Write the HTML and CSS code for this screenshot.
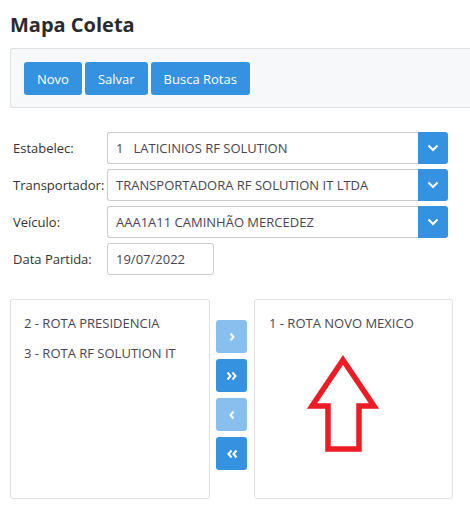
FILE: index.html
```html
<!DOCTYPE html>
<html>
<head>
<meta charset="utf-8">
<link rel="stylesheet" href="styles.css">
</head>
<body>
<h1 class="title">Mapa Coleta</h1>
<div class="toolbar">
  <button class="btn">Novo</button>
  <button class="btn">Salvar</button>
  <button class="btn">Busca Rotas</button>
</div>
<div class="form">
  <div class="row">
    <label class="lbl">Estabelec:</label>
    <div class="select"><span class="val">1&nbsp;&nbsp;&nbsp;LATICINIOS RF SOLUTION</span><span class="caret"><svg width="12" height="8" viewBox="0 0 12 8"><polyline points="1.5,1.5 6,6 10.5,1.5" fill="none" stroke="#fff" stroke-width="2"/></svg></span></div>
  </div>
  <div class="row">
    <label class="lbl">Transportador:</label>
    <div class="select"><span class="val">TRANSPORTADORA RF SOLUTION IT LTDA</span><span class="caret"><svg width="12" height="8" viewBox="0 0 12 8"><polyline points="1.5,1.5 6,6 10.5,1.5" fill="none" stroke="#fff" stroke-width="2"/></svg></span></div>
  </div>
  <div class="row">
    <label class="lbl">Veículo:</label>
    <div class="select"><span class="val">AAA1A11 CAMINHÃO MERCEDEZ</span><span class="caret"><svg width="12" height="8" viewBox="0 0 12 8"><polyline points="1.5,1.5 6,6 10.5,1.5" fill="none" stroke="#fff" stroke-width="2"/></svg></span></div>
  </div>
  <div class="row">
    <label class="lbl">Data Partida:</label>
    <div class="date">19/07/2022</div>
  </div>
</div>
<div class="dual">
  <div class="list">
    <div class="item">2 - ROTA PRESIDENCIA</div>
    <div class="item">3 - ROTA RF SOLUTION IT</div>
  </div>
  <div class="moves">
    <button class="mv light"><svg width="8" height="10" viewBox="0 0 8 10"><polyline points="2.5,1.5 5.5,5 2.5,8.5" fill="none" stroke="#fff" stroke-width="2"/></svg></button>
    <button class="mv"><svg width="12" height="10" viewBox="0 0 12 10"><polyline points="1.5,1.5 4.5,5 1.5,8.5" fill="none" stroke="#fff" stroke-width="2"/><polyline points="6.5,1.5 9.5,5 6.5,8.5" fill="none" stroke="#fff" stroke-width="2"/></svg></button>
    <button class="mv light"><svg width="8" height="10" viewBox="0 0 8 10"><polyline points="5.5,1.5 2.5,5 5.5,8.5" fill="none" stroke="#fff" stroke-width="2"/></svg></button>
    <button class="mv"><svg width="12" height="10" viewBox="0 0 12 10"><polyline points="5.5,1.5 2.5,5 5.5,8.5" fill="none" stroke="#fff" stroke-width="2"/><polyline points="10.5,1.5 7.5,5 10.5,8.5" fill="none" stroke="#fff" stroke-width="2"/></svg></button>
  </div>
  <div class="list right">
    <div class="item">1 - ROTA NOVO MEXICO</div>
    <svg class="arrow" width="198" height="198" viewBox="254 299 198 198"><polygon points="343,360 374,406 359,406 359,449 328,449 328,406 312,406" fill="none" stroke="#ec1c24" stroke-width="5.5" stroke-linejoin="miter"/></svg>
  </div>
</div>
</body>
</html>
```
FILE: styles.css
```css
html, body { margin: 0; padding: 0; }
body {
  padding: 0 10px;
  font-family: "Open Sans", "Liberation Sans", sans-serif;
  font-size: 13px;
  color: #333;
  background: #fff;
  overflow: hidden;
  width: 470px;
  box-sizing: border-box;
}
.title {
  margin: 0;
  padding-top: 11px;
  height: 48px;
  box-sizing: border-box;
  font-size: 20px;
  font-weight: 700;
  line-height: 28px;
  color: #2b2b2b;
}
.toolbar {
  width: calc(100% + 10px);
  height: 60px;
  box-sizing: border-box;
  border: 1px solid #dfe1e6;
  border-right: none;
  border-radius: 3px 0 0 3px;
  background: #f7f8fa;
  padding: 13px 13px;
  display: flex;
  gap: 3px;
}
.btn {
  height: 33px;
  border: none;
  border-radius: 3px;
  background: #3592e0;
  color: #fff;
  font-family: "Open Sans", "Liberation Sans", sans-serif;
  font-size: 13px;
  padding: 0 13px;
}
.form {
  padding: 24px 0 0 3px;
  display: flex;
  flex-direction: column;
  gap: 5px;
}
.row {
  display: flex;
  align-items: center;
  height: 32px;
}
.lbl { width: 94px; flex: none; }
.select {
  display: flex;
  width: 341px;
  height: 32px;
}
.val {
  flex: 1;
  border: 1px solid #ccc;
  border-right: none;
  border-radius: 3px 0 0 3px;
  padding: 0 8px;
  line-height: 30px;
  color: #4a4356;
  white-space: nowrap;
  overflow: hidden;
}
.caret {
  width: 30px;
  background: #3592e0;
  border-radius: 0 3px 3px 0;
  display: flex;
  align-items: center;
  justify-content: center;
}
.date {
  width: 107px;
  height: 32px;
  box-sizing: border-box;
  border: 1px solid #ccc;
  border-radius: 3px;
  padding: 0 8px;
  line-height: 30px;
  color: #4a4356;
}
.dual {
  margin-top: 24px;
  display: flex;
  align-items: flex-start;
}
.list {
  position: relative;
  width: 200px;
  height: 200px;
  box-sizing: border-box;
  border: 1px solid #dfe1e6;
  border-radius: 3px;
  padding: 8px 13px;
  color: #4a4356;
}
.list.right { width: 199px; padding-left: 14px; }
.item { line-height: 30px; }
.moves {
  margin: 21px 7px 0 6px;
  display: flex;
  flex-direction: column;
  gap: 6px;
}
.mv {
  width: 31px;
  height: 33px;
  border: none;
  border-radius: 3px;
  background: #3592e0;
  display: flex;
  align-items: center;
  justify-content: center;
  padding: 0;
}
.mv.light { background: #88bfee; }
.arrow { position: absolute; left: -1px; top: -1px; }
```
